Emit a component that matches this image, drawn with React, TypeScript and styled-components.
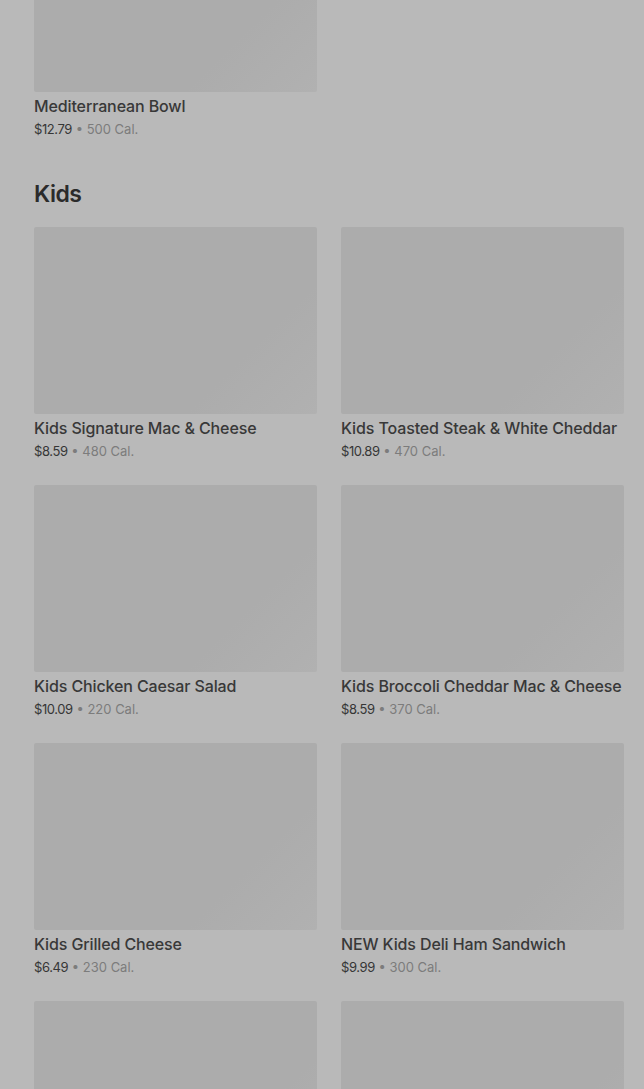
import styled, { createGlobalStyle } from 'styled-components'

const GlobalStyle = createGlobalStyle`
  html, body {
    margin: 0;
    padding: 0;
    background: #b9b9b9;
    overflow: hidden;
  }
  body {
    font-family: Inter, "Noto Sans", "Liberation Sans", sans-serif;
    -webkit-font-smoothing: antialiased;
  }
`

const Page = styled.main`
  width: 644px;
  height: 1089px;
  overflow: hidden;
  box-sizing: border-box;
  padding: 0 20px 0 34px;
`

const Scroller = styled.div`
  margin-top: -95px;
`

const Section = styled.section`
  margin-bottom: 39px;
`

const SectionTitle = styled.h2`
  margin: 0 0 17px;
  font-size: 23px;
  line-height: 32px;
  font-weight: 600;
  letter-spacing: -0.5px;
  color: #2b2b2b;
`

const Grid = styled.div`
  display: grid;
  grid-template-columns: 283px 283px;
  column-gap: 24px;
  row-gap: 24px;
`

const Card = styled.div`
  display: flex;
  flex-direction: column;
`

const Thumb = styled.div`
  height: 187px;
  border-radius: 2px;
  background: linear-gradient(135deg, #acacac 0%, #acacac 72%, #b1b1b1 100%);
`

const Name = styled.div`
  margin-top: 4px;
  font-size: 16px;
  line-height: 20px;
  font-weight: 500;
  letter-spacing: -0.12px;
  color: #383838;
  white-space: nowrap;
`

const Meta = styled.div`
  margin-top: 3px;
  font-size: 13px;
  line-height: 20px;
  color: #7c7c7c;
  white-space: nowrap;
`

const Price = styled.span`
  color: #363636;
  letter-spacing: -0.4px;
`

interface Item {
  name?: string
  price?: string
  cal?: number
}

const Dish = ({ item }: { item: Item }) => (
  <Card>
    <Thumb />
    {item.name && <Name>{item.name}</Name>}
    {item.price && (
      <Meta>
        <Price>{item.price}</Price> • {item.cal} Cal.
      </Meta>
    )}
  </Card>
)

const bowls: Item[] = [{ name: 'Mediterranean Bowl', price: '$12.79', cal: 500 }]

const kids: Item[] = [
  { name: 'Kids Signature Mac & Cheese', price: '$8.59', cal: 480 },
  { name: 'Kids Toasted Steak & White Cheddar', price: '$10.89', cal: 470 },
  { name: 'Kids Chicken Caesar Salad', price: '$10.09', cal: 220 },
  { name: 'Kids Broccoli Cheddar Mac & Cheese', price: '$8.59', cal: 370 },
  { name: 'Kids Grilled Cheese', price: '$6.49', cal: 230 },
  { name: 'NEW Kids Deli Ham Sandwich', price: '$9.99', cal: 300 },
  {},
  {},
]

export default function App() {
  return (
    <Page>
      <GlobalStyle />
      <Scroller>
        <Section>
          <Grid>
            {bowls.map((item, i) => (
              <Dish key={i} item={item} />
            ))}
          </Grid>
        </Section>
        <Section>
          <SectionTitle>Kids</SectionTitle>
          <Grid>
            {kids.map((item, i) => (
              <Dish key={i} item={item} />
            ))}
          </Grid>
        </Section>
      </Scroller>
    </Page>
  )
}
